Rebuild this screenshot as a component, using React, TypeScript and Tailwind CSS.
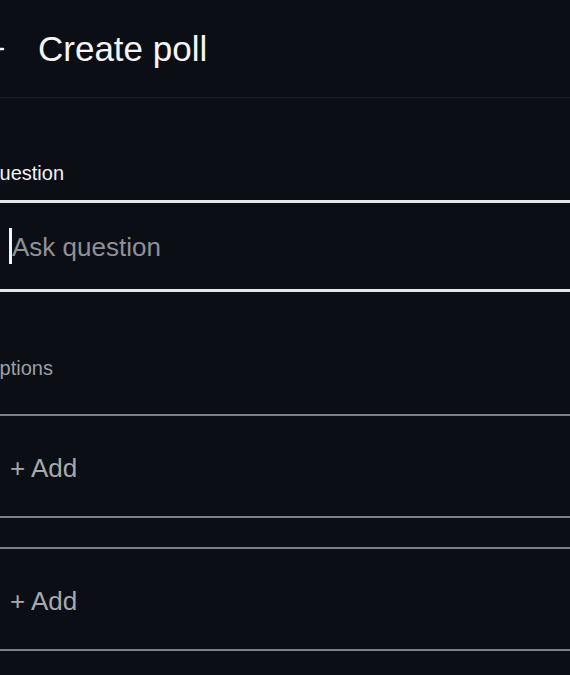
const FONT = "font-['Liberation_Sans','Helvetica','Arial',sans-serif]"

function BackArrow() {
  return (
    <svg width="28" height="28" viewBox="0 0 28 28" fill="none" className="shrink-0">
      <path d="M26 14H3M13 4L3 14l10 10" stroke="#f2f3f5" strokeWidth="2.6" strokeLinecap="round" strokeLinejoin="round" />
    </svg>
  )
}

function OptionRow() {
  return (
    <div className="flex items-center h-[104px] border-y-2 border-[#7c7f85] pl-[26px] pt-[3px]">
      <span className="text-[26px] leading-none text-[#a6a9ae]">+ Add</span>
    </div>
  )
}

export default function App() {
  return (
    <div className={`w-[570px] h-[675px] overflow-hidden bg-[#0b0e15] ${FONT}`}>
      <div className="ml-[-16px] w-[640px]">
        {/* header */}
        <div className="flex items-center h-[98px] border-b border-[#1b1f27]">
          <div className="ml-[-7px]">
            <BackArrow />
          </div>
          <h1 className="ml-[33px] text-[35px] leading-none text-[#f4f5f7]">Create poll</h1>
        </div>

        {/* question */}
        <div className="mt-[63px] text-[20px] leading-[24px] text-[#f1f2f4]">Question</div>
        <div className="mt-[15px] flex items-center h-[92px] border-y-[3px] border-[#e4e6ea] pl-[25px]">
          <span className="w-[3px] h-[36px] bg-[#f4f5f7]" />
          <span className="text-[26px] leading-none text-[#8e9196] pt-[2px]">Ask question</span>
        </div>

        {/* options */}
        <div className="mt-[64px] text-[20px] leading-[24px] text-[#9c9fa4]">Options</div>
        <div className="mt-[34px] flex flex-col gap-[29px]">
          <OptionRow />
          <OptionRow />
        </div>
      </div>
    </div>
  )
}
